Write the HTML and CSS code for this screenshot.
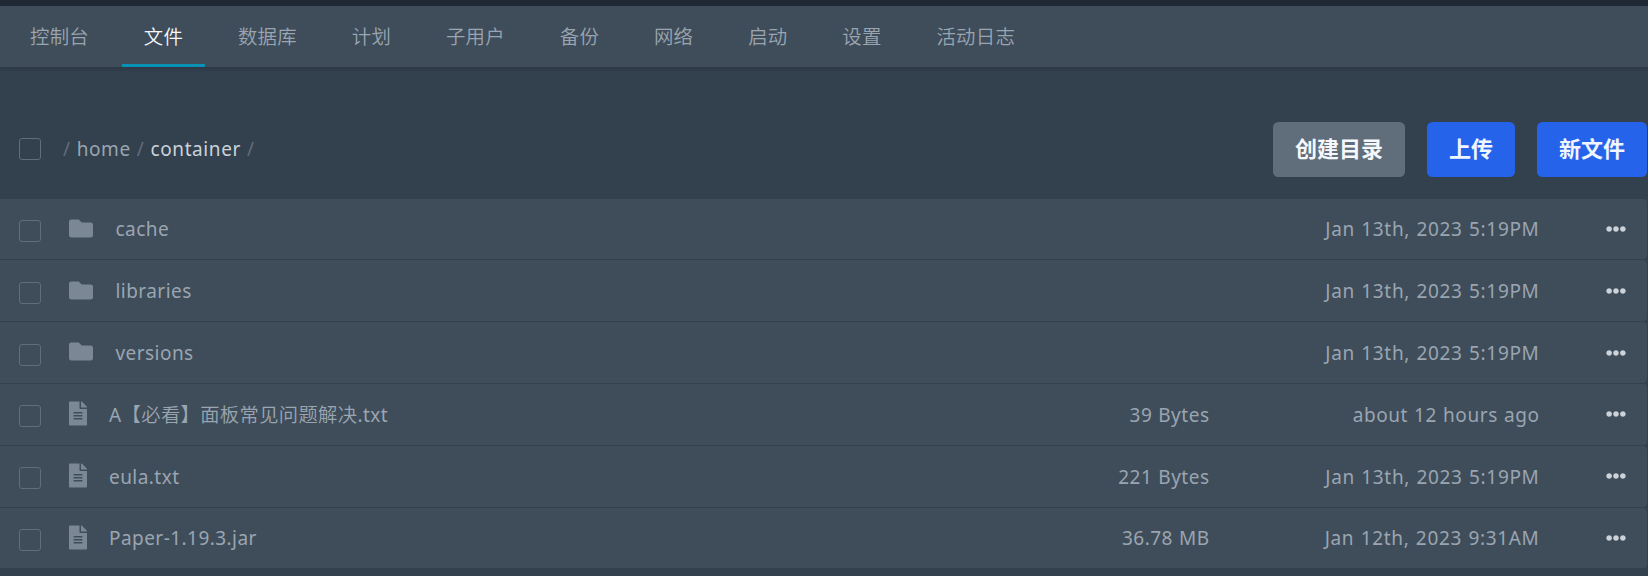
FILE: index.html
```html
<!DOCTYPE html>
<html lang="zh-CN">
<head>
<meta charset="utf-8">
<title>文件</title>
<link rel="stylesheet" href="styles.css">
</head>
<body>
<svg class="defs" width="0" height="0">
  <symbol id="folder" viewBox="0 0 512 512"><path d="M464 128H272l-64-64H48C21.500 64 0 85.500 0 112v288c0 26.500 21.500 48 48 48h416c26.500 0 48-21.500 48-48V176c0-26.500-21.500-48-48-48z"/></symbol>
  <symbol id="file" viewBox="0 0 384 512"><path d="M224 136V0H24C10.700 0 0 10.700 0 24v464c0 13.300 10.700 24 24 24h336c13.300 0 24-10.700 24-24V160H248c-13.200 0-24-10.800-24-24zm64 236c0 6.600-5.400 12-12 12H108c-6.600 0-12-5.400-12-12v-8c0-6.600 5.400-12 12-12h168c6.600 0 12 5.400 12 12v8zm0-64c0 6.600-5.400 12-12 12H108c-6.600 0-12-5.400-12-12v-8c0-6.600 5.400-12 12-12h168c6.600 0 12 5.400 12 12v8zm0-72v8c0 6.600-5.400 12-12 12H108c-6.600 0-12-5.400-12-12v-8c0-6.600 5.400-12 12-12h168c6.600 0 12 5.400 12 12zm96-114.100v6.100H256V0h6.100c6.400 0 12.500 2.500 17 7l97.900 98c4.500 4.500 7 10.600 7 16.900z"/></symbol>
  <symbol id="dots" viewBox="0 0 512 512"><path d="M328 256c0 39.800-32.200 72-72 72s-72-32.200-72-72 32.200-72 72-72 72 32.200 72 72zm104-72c-39.800 0-72 32.200-72 72s32.200 72 72 72 72-32.200 72-72-32.200-72-72-72zm-352 0c-39.800 0-72 32.200-72 72s32.200 72 72 72 72-32.200 72-72-32.200-72-72-72z"/></symbol>
</svg>
<nav class="nav">
  <a>控制台</a><a class="active">文件</a><a>数据库</a><a>计划</a><a>子用户</a><a>备份</a><a>网络</a><a>启动</a><a>设置</a><a>活动日志</a>
</nav>
<main>
  <header class="toolbar">
    <span class="check"></span>
    <div class="crumbs"><span>/</span><a>home</a><span>/</span><b>container</b><span>/</span></div>
    <div class="buttons">
      <button class="grey">创建目录</button><button>上传</button><button>新文件</button>
    </div>
  </header>
  <section class="list">
    <div class="row"><span class="check"></span><svg class="icon folder"><use href="#folder"/></svg><span class="name">cache</span><span class="size"></span><span class="date">Jan 13th, 2023 5:19PM</span><svg class="dots"><use href="#dots"/></svg></div>
    <div class="row"><span class="check"></span><svg class="icon folder"><use href="#folder"/></svg><span class="name">libraries</span><span class="size"></span><span class="date">Jan 13th, 2023 5:19PM</span><svg class="dots"><use href="#dots"/></svg></div>
    <div class="row"><span class="check"></span><svg class="icon folder"><use href="#folder"/></svg><span class="name">versions</span><span class="size"></span><span class="date">Jan 13th, 2023 5:19PM</span><svg class="dots"><use href="#dots"/></svg></div>
    <div class="row"><span class="check"></span><svg class="icon file"><use href="#file"/></svg><span class="name">A<span class="cjk">【必看】面板常见问题解决</span>.txt</span><span class="size">39 Bytes</span><span class="date relative">about 12 hours ago</span><svg class="dots"><use href="#dots"/></svg></div>
    <div class="row"><span class="check"></span><svg class="icon file"><use href="#file"/></svg><span class="name">eula.txt</span><span class="size">221 Bytes</span><span class="date">Jan 13th, 2023 5:19PM</span><svg class="dots"><use href="#dots"/></svg></div>
    <div class="row"><span class="check"></span><svg class="icon file"><use href="#file"/></svg><span class="name">Paper-1.19.3.jar</span><span class="size">36.78 MB</span><span class="date">Jan 12th, 2023 9:31AM</span><svg class="dots"><use href="#dots"/></svg></div>
  </section>
</main>
</body>
</html>
```
FILE: styles.css
```css
* { box-sizing: border-box; }
body {
  margin: 0;
  height: 576px;
  overflow: hidden;
  background: #33404d;
  border-top: 6px solid #1f2933;
  color: #9aa5b1;
  font: 19px/28px "Noto Sans", "Noto Sans CJK SC", sans-serif;
  letter-spacing: 0.45px;
}
.defs { position: absolute; }
.nav {
  display: flex;
  height: 61px;
  padding-left: 8px;
  background: #3f4d5a;
  box-shadow: 0 1px 4px rgba(31, 25, 51, 0.3);
  font: 350 19.4px/28px "Noto Sans CJK SC", sans-serif;
  letter-spacing: 0.25px;
}
.nav a { padding: 16px 22px 0; margin-right: 10.9px; }
.nav .active { color: #f5f7fa; box-shadow: inset 0 -3px #0891b2; }
.toolbar {
  display: flex;
  align-items: center;
  height: 55px;
  margin: 55px 1px 21.6px 0;
  padding-left: 19px;
}
.check {
  flex: none;
  width: 22px;
  height: 22px;
  border: 1px solid #606d7b;
  border-radius: 3px;
}
.toolbar .check { margin-bottom: 1px; }
.crumbs { display: flex; gap: 6px; margin: 0 0 2px 22px; letter-spacing: 0.6px; }
.crumbs span { color: #606d7b; }
.crumbs b { color: #cbd2d9; font-weight: 400; }
.buttons { display: flex; gap: 22px; margin-left: auto; }
button {
  height: 55px;
  padding: 0 22px 6px;
  border: 0;
  border-radius: 5.5px;
  background: #2563eb;
  color: #eff6ff;
  font: 700 22px/30px "Noto Sans CJK SC", sans-serif;
}
.grey { background: #606d7b; color: #f5f7fa; }
.list { display: flex; flex-direction: column; gap: 1px; margin-right: 1px; }
.row {
  display: flex;
  align-items: center;
  height: 60.8px;
  padding: 0 21.5px 0 19px;
  border-radius: 0 4px 4px 0;
  background: #3f4d5a;
}
.row .check { margin-top: 4px; }
.icon { flex: none; margin-left: 28px; fill: #7b8794; }
.folder { width: 24px; height: 25px; margin: 0 22.5px 1.5px 28px; }
.file { width: 18px; height: 25px; margin: 0 22px 1px 28px; }
.name, .size, .date { padding-top: 0.8px; }
.name { flex: 1; }
.cjk { font-family: "Noto Sans CJK SC", sans-serif; font-size: 19.25px; font-weight: 350; line-height: 20px; letter-spacing: 0.4px; }
.size { width: 200px; text-align: right; letter-spacing: 0.5px; word-spacing: 0.5px; }
.date { width: 330px; text-align: right; letter-spacing: 0.67px; word-spacing: 0.8px; }
.date.relative { letter-spacing: 0.57px; word-spacing: 0.6px; }
.dots { width: 20px; height: 20px; margin: 0 0 0 66px; fill: #cbd2d9; }
```
